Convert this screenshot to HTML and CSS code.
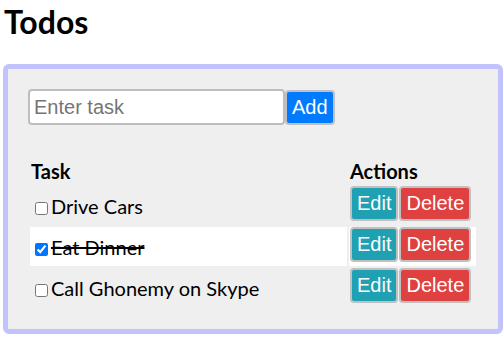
FILE: index.html
```html
<!DOCTYPE html>
<html lang="en">
<head>
  <meta charset="UTF-8" />
  <title>Todos</title>
  <link rel="stylesheet" href="styles.css">
</head>
<body>
  <h1 class="title">Todos</h1>

  <div class="card">
    <form class="add-form">
      <input type="text" class="task-input" placeholder="Enter task" />
      <button type="submit" class="btn btn-add">Add</button>
    </form>

    <table class="todo-table">
      <thead>
        <tr>
          <th>Task</th>
          <th class="col-actions">Actions</th>
        </tr>
      </thead>
      <tbody>
        <tr>
          <td><label class="task"><input type="checkbox" />Drive Cars</label></td>
          <td>
            <div class="actions">
              <button class="btn btn-edit">Edit</button>
              <button class="btn btn-delete">Delete</button>
            </div>
          </td>
        </tr>
        <tr class="done">
          <td><label class="task"><input type="checkbox" checked />Eat Dinner</label></td>
          <td>
            <div class="actions">
              <button class="btn btn-edit">Edit</button>
              <button class="btn btn-delete">Delete</button>
            </div>
          </td>
        </tr>
        <tr>
          <td><label class="task"><input type="checkbox" />Call Ghonemy on Skype</label></td>
          <td>
            <div class="actions">
              <button class="btn btn-edit">Edit</button>
              <button class="btn btn-delete">Delete</button>
            </div>
          </td>
        </tr>
      </tbody>
    </table>
  </div>
</body>
</html>
```

FILE: styles.css
```css
body {
  margin: 3px 0 0 3px;
  font-family: Lato, "Noto Sans", sans-serif;
  color: #000;
  background: #fff;
}

.title {
  margin: 0 0 23px 1px;
  font-size: 32px;
  font-weight: 700;
  line-height: 1.2;
}

/* Card holding the form and the list */
.card {
  width: 500px;
  box-sizing: border-box;
  padding: 20px;
  background-color: #efefef;
  border: 5px solid #c2c2fc;
  border-radius: 6px;
}

.add-form {
  display: flex;
  align-items: flex-end;
  margin-bottom: 31px;
}

.task-input {
  width: 257px;
  height: 36px;
  box-sizing: border-box;
  padding: 0 4px;
  font-family: "Liberation Sans", Arial, sans-serif;
  font-size: 20px;
  border: 2px solid #bdbdbd;
  border-radius: 4px;
  background: #fff;
}
.task-input::placeholder {
  color: #757575;
}

.btn {
  font-family: "Liberation Sans", Arial, sans-serif;
  font-size: 20px;
  line-height: 23px;
  color: #fff;
  padding: 4px 5px;
  border: 2px solid #c0c0c0;
  border-radius: 4px;
  cursor: pointer;
}
.btn-add { background-color: #007bff; }
.btn-edit { background-color: #20a0b3; }
.btn-delete { background-color: #df4040; }

/* Table */
.todo-table {
  width: 100%;
  border-spacing: 2px;
  font-size: 20px;
}
.todo-table th {
  text-align: left;
  font-weight: 700;
  padding: 1px;
  line-height: 1.2;
}
.todo-table th.col-actions {
  width: 125px;
}
.todo-table td {
  padding: 0 1px;
  vertical-align: middle;
}

.task input {
  margin: 3px 3px 3px 4px;
  vertical-align: -1px;
}

.actions {
  display: flex;
  gap: 1px;
  padding-bottom: 4px;
}

tr.done td {
  background-color: #fff;
}
tr.done .task {
  text-decoration: line-through;
}
```
